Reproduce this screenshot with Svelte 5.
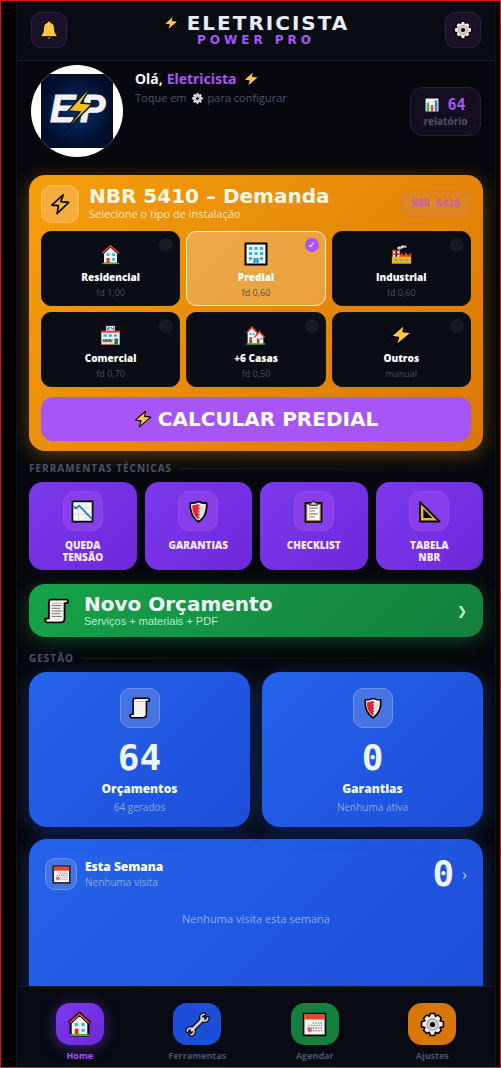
<script lang="ts">
	const types = [
		{ id: 'residencial', icon: 'house', label: 'Residencial', info: 'fd 1,00' },
		{ id: 'predial', icon: 'office', label: 'Predial', info: 'fd 0,60' },
		{ id: 'industrial', icon: 'factory', label: 'Industrial', info: 'fd 0,60' },
		{ id: 'comercial', icon: 'store', label: 'Comercial', info: 'fd 0,70' },
		{ id: 'casas', icon: 'houses', label: '+6 Casas', info: 'fd 0,50' },
		{ id: 'outros', icon: 'bolt', label: 'Outros', info: 'manual' }
	];

	const tools = [
		{ icon: 'chartDown', lines: ['Queda', 'Tensão'] },
		{ icon: 'shield', lines: ['Garantias'] },
		{ icon: 'clipboard', lines: ['Checklist'] },
		{ icon: 'ruler', lines: ['Tabela', 'NBR'] }
	];

	const stats = [
		{ icon: 'scroll', value: 64, label: 'Orçamentos', info: '64 gerados' },
		{ icon: 'shield', value: 0, label: 'Garantias', info: 'Nenhuma ativa' }
	];

	const nav = [
		{ icon: 'house', label: 'Home', tone: 'purple' },
		{ icon: 'wrench', label: 'Ferramentas', tone: 'blue' },
		{ icon: 'calendar', label: 'Agendar', tone: 'green' },
		{ icon: 'gear', label: 'Ajustes', tone: 'orange' }
	];

	let selected = $state('predial');
	let active = $state('Home');
	let selectedLabel = $derived(types.find((t) => t.id === selected)?.label ?? '');
</script>

{#snippet icon(name: string, size: number)}
	<svg class="icon" width={size} height={size} viewBox="0 0 24 24" aria-hidden="true">
		{#if name === 'bolt'}
			<path d="M15.500 1.500 2 13.500l7.500 1L7 22.500 22.500 9.500l-8.500-1z" fill="#ffc83d" stroke="#000" stroke-width="1.4" stroke-linejoin="round" />
		{:else if name === 'boltLine'}
			<path d="M15.5 2 3 13.2l7.4.6-1.6 8.7L21.5 10.2l-8.6-.6z" fill="#ffb52e" stroke="#000" stroke-width="1.8" stroke-linejoin="round" />
		{:else if name === 'bell'}
			<path d="M12 1.2c1.2 0 1.7.7 1.8 1.7 3.4 1 4.7 3.7 4.7 7.1 0 4 1 6 3 8.500v1.500H2.500V18.500c2-2.500 3-4.500 3-8.500 0-3.400 1.300-6.100 4.700-7.100.1-1 .6-1.700 1.800-1.700z" fill="#ffc83d" stroke="#000" stroke-width="1" />
			<path d="M9.500 20.500h5a2.500 2.500 0 0 1-5 0z" fill="#d67d00" stroke="#000" stroke-width=".7" />
		{:else if name === 'gear'}
			<path d="M9.800 1.500h4.400l.6 2.700 2.600-1.300 3.100 3.100-1.300 2.500 3.300.9v4.800l-3.300.8 1.300 2.600-3.100 3.100-2.600-1.300-.6 3.100H9.800l-.8-3.100-2.500 1.300-3.100-3.100L4.700 15l-3.200-.8V9.400l3.200-.9L3.400 6l3.100-3.100L9 4.200z" fill="#f0eeee" stroke="#000" stroke-width="1.500" stroke-linejoin="round" />
			<circle cx="12" cy="12" r="5.400" fill="#d8d4d2" stroke="#99928f" stroke-width="1" />
			<circle cx="12" cy="12" r="2.500" fill="#000" />
		{:else if name === 'house'}
			<path d="M3.500 10v12.500h17V10L12 2.500z" fill="#f5f5f7" stroke="#000" stroke-width="2" />
			<path d="M2 11 12 1.500 22 11" fill="none" stroke="#000" stroke-width="3.600" />
			<path d="M2.500 10.700 12 2l9.500 8.700" fill="none" stroke="#ef4527" stroke-width="1.700" />
			<path d="M7.500 10.500h3.200v3.200H7.500zM13.800 10.500H17v3.200h-3.200zM13.800 16H17v3h-3.200z" fill="#28bde6" />
			<path d="M7.500 16h3.500v6H7.500z" fill="#dd3522" />
			<path d="M2.500 21.500h19V23h-19z" fill="#35c535" />
		{:else if name === 'houses'}
			<path d="M3 8.500V21h10V8.500L8 3z" fill="#f5f5f7" />
			<path d="m1.800 9.500 6.200-7 6.200 7" fill="none" stroke="#e9452e" stroke-width="1.700" />
			<path d="M5 9h2.500v2.500H5zM9 9h2v2.500H9z" fill="#28bde6" />
			<path d="M5 14h3v7H5z" fill="#dd3522" />
			<path d="M12 13v8.500h9V13l-4.500-4.500z" fill="#f5f5f7" />
			<path d="m10.800 14.200 5.700-6.400 5.700 6.400" fill="none" stroke="#e9452e" stroke-width="1.700" />
			<path d="M17.800 14.500h2.400v2.500h-2.400z" fill="#28bde6" />
			<path d="M13.500 15.500h3v6h-3z" fill="#dd3522" />
			<path d="M1.500 21H23v1.500H1.500z" fill="#35c535" />
		{:else if name === 'office'}
			<path d="M1.500 1.500h21v21h-21z" fill="#e9f5fb" stroke="#000" stroke-width="2" />
			<path d="M5 5h3v3H5zM10.500 5h3v3h-3zM16 5h3v3h-3zM5 10h3v3H5zM10.500 10h3v3h-3zM16 10h3v3h-3zM5 15h3v3H5zM16 15h3v3h-3z" fill="#29b9e8" />
			<path d="M9.500 16h5v6h-5z" fill="#1789ce" />
			<path d="M12 16v6" stroke="#a9e4fa" stroke-width=".8" />
		{:else if name === 'factory'}
			<path d="M2 8h3v7H2zM7 8h3v7H7z" fill="#f2f2f2" />
			<path d="M1.500 6.500h4v2h-4zM6.500 6.500h4v2h-4zM1.500 10.500h4v2h-4zM6.500 10.500h4v2h-4z" fill="#e94335" />
			<path d="M7 5c0-2 2-2.500 4-2 1-2 4-2 5-.7 1-.6 2 .3 2 1.700-2 .5-3-.5-4 .5-2 .9-3 .7-4 2z" fill="#d2d2d2" />
			<path d="m10 14 2-4 3 3.500 2-4 2.500 3.500L23 10v5H10z" fill="#ef4123" />
			<path d="M1 14.500h22v8H1z" fill="#f6ad20" />
			<path d="M4 17h3v2H4zM10 17h3v2h-3zM16 17h3v2h-3z" fill="#35b8b1" />
		{:else if name === 'store'}
			<path d="M7 1h10v6H7z" fill="#f3f4f8" />
			<path d="M8.500 2.300h2v1.500h-2v1.500h2.200M13 2.200v2h2.500M15.500 2v4" fill="none" stroke="#3154c9" stroke-width="1" />
			<path d="M1.500 7h21v15.500h-21z" fill="#eff0f4" />
			<path d="M1 6.500h22v2.300H1z" fill="#e14231" />
			<path d="M4 10.500h3.500v3H4zM10 10.500h3.500v3H10zM16 10.500h3.500v3H16z" fill="#28b5e2" />
			<path d="M3 16h11v3.500H3z" fill="#7d5b50" />
			<path d="M4 16h2v2H4zM8 16h2v2H8zM12 16h2v2h-2z" fill="#34bad2" />
			<path d="M16.500 15.500h4v7h-4z" fill="#306a4c" />
			<path d="M1 21.500h15.500v1H1z" fill="#cb4937" />
		{:else if name === 'bars'}
			<path d="M1 1h22v22H1z" fill="#f6f7f9" />
			<path d="M1 7h22M1 12h22M1 17h22M8 1v22M15 1v22" stroke="#cdd2d8" stroke-width=".8" />
			<path d="M3 8h4v15H3z" fill="#34b94d" />
			<path d="M10 12h4v11h-4z" fill="#e6492f" />
			<path d="M17 4h4v19h-4z" fill="#2c7bd8" />
		{:else if name === 'chartDown'}
			<path d="M1.500 1.500h21v21h-21z" fill="#f6f7f7" stroke="#000" stroke-width="1.700" />
			<path d="M8 2v20M15.500 2v20M2 8.500h20M2 15h20" stroke="#d3d7d8" stroke-width="1" />
			<path d="m2 6 3 3 3.500-3 5 5 8.500 9" fill="none" stroke="#257bd0" stroke-width="1.800" />
		{:else if name === 'shield'}
			<path d="M12 1.500C9.500 3 6 3.300 3.500 3.300c-.5 8.200 1.500 15 8.500 19.500 7-4.500 9-11.300 8.500-19.500-2.500 0-6-.3-8.500-1.800z" fill="#f3efed" stroke="#000" stroke-width="1.800" />
			<path d="M12 4c-1.800 1-4 1.500-6.500 1.600C5.400 12 7 16.800 12 20.400z" fill="#e81e35" />
			<path d="M12.500 5v14" stroke="#e81e35" stroke-width="1.400" stroke-dasharray="1.700 1.500" />
			<path d="M14.500 5.200v12.600c2.600-3 3.900-6.800 3.800-11.800-1.500-.1-2.600-.3-3.800-.8z" fill="#e4dedb" />
		{:else if name === 'clipboard'}
			<path d="M3.500 3h17v20h-17z" fill="#af7446" stroke="#000" stroke-width="1.600" />
			<path d="M5.500 5h13v16h-13z" fill="#f8f7f5" />
			<path d="M8 5.500V3h2.200a1.800 1.800 0 0 1 3.600 0H16v2.500z" fill="#c9c4c2" stroke="#000" stroke-width=".9" />
			<path d="M7.500 8.500h9M7.500 11.500h6M7.500 14.500h9M7.500 17.500h6" stroke="#8a8583" stroke-width="1.100" />
		{:else if name === 'ruler'}
			<path d="M2 2v20.500h20.500z" fill="#f5b52a" stroke="#000" stroke-width="2" stroke-linejoin="round" />
			<path d="M6.500 11.500V18H13z" fill="#000" stroke="#000" stroke-width="1.700" />
			<path d="m5 6-1.500 1.500M8 9 6.500 10.500M11 12l-1.500 1.500M14 15l-1.500 1.500M17 18l-1.500 1.500" stroke="#8f641c" stroke-width=".8" />
		{:else if name === 'scroll' || name === 'scrollText'}
			<path d="M6 1.500h15c1.200 0 1.500 1.500 1 3H19v14.500c0 2.200-1 3.500-3 3.500H3c-1.300 0-2-1.200-2-3.500h3.500V5c0-2.300.2-3.500 1.500-3.500z" fill="#f4f2f1" stroke="#000" stroke-width="1.700" stroke-linejoin="round" />
			<path d="M7 2.500h13.500v1.500H7zM3 20h12.500v1.500H3z" fill="#fff" />
			<path d="M7 5h10" stroke="#b4adaa" stroke-width=".8" />
			{#if name === 'scrollText'}
				<path d="M7 7h9.500M7 9.500h8M7 12h9.500M7 14.500h8M7 17h9.500" stroke="#77706e" stroke-width=".9" />
			{/if}
		{:else if name === 'calendar'}
			<path d="M1.500 1.500h21v21h-21z" fill="#f8f7f7" stroke="#000" stroke-width="1.600" />
			<path d="M2.200 2.200h19.600v5H2.200z" fill="#ed4224" />
			<path d="M10 10.500h10M6 13h14M5 15.500h15M8 18h12" stroke="#a7a2a1" stroke-width="1.500" stroke-dasharray="1.700 .8" />
			<path d="m5.500 15.500 3.500 3.500M9 15.500 5.500 19M7.200 14.700v5M4.700 17.200h5" stroke="#ed3c45" stroke-width=".9" />
		{:else if name === 'wrench'}
			<g fill="none" stroke-linecap="round" stroke-linejoin="round">
				<path d="M6.500 17.500 17.500 6.500" stroke="#000" stroke-width="5" />
				<path d="M18.500 2.200a3.200 3.200 0 1 0 3.300 3.300M5.500 21.800a3.200 3.200 0 1 0-3.300-3.300" stroke="#000" stroke-width="4" />
				<path d="M6.500 17.500 17.500 6.500" stroke="#d6d2d1" stroke-width="2.600" />
				<path d="M18.500 2.200a3.200 3.200 0 1 0 3.300 3.300M5.500 21.800a3.200 3.200 0 1 0-3.300-3.300" stroke="#d6d2d1" stroke-width="1.600" />
			</g>
		{/if}
	</svg>
{/snippet}

<div class="page">
	<div class="frame">
		<header>
			<button class="square" aria-label="Notificações">{@render icon('bell', 20)}</button>
			<div class="brand">
				<h1>{@render icon('bolt', 16)} ELETRICISTA</h1>
				<p>POWER PRO</p>
			</div>
			<button class="square" aria-label="Configurações">{@render icon('gear', 20)}</button>
		</header>

		<main>
			<section class="profile">
				<svg class="avatar" viewBox="0 0 92 92" role="img" aria-label="EP">
					<defs>
						<radialGradient id="night">
							<stop offset="0" stop-color="#06306b" />
							<stop offset="1" stop-color="#020d2a" />
						</radialGradient>
						<linearGradient id="flash" x1="0" y1="0" x2="0" y2="1">
							<stop offset="0" stop-color="#ffd928" />
							<stop offset="1" stop-color="#f5a000" />
						</linearGradient>
						<clipPath id="round"><circle cx="46" cy="46" r="46" /></clipPath>
					</defs>
					<circle cx="46" cy="46" r="46" fill="#fff" />
					<rect x="10" y="9" width="72" height="74" rx="4" fill="url(#night)" clip-path="url(#round)" />
					<text x="19" y="57" class="logo-text">E</text>
					<text x="49" y="57" class="logo-text">P</text>
					<path d="M62 19 37 46l12 1-20 25 32-33-11-1z" fill="url(#flash)" stroke="#071632" stroke-width="1.500" />
				</svg>
				<div class="hello">
					<h2>Olá, <span>Eletricista</span> {@render icon('bolt', 18)}</h2>
					<p>Toque em {@render icon('gear', 13)} para configurar</p>
				</div>
				<button class="report">
					<span class="report-value">{@render icon('bars', 14)} 64</span>
					<span class="report-label">relatório</span>
				</button>
			</section>

			<section class="demand">
				<div class="demand-head">
					<div class="demand-icon">{@render icon('boltLine', 22)}</div>
					<div class="demand-title">
						<h2>NBR 5410 – Demanda</h2>
						<p>Selecione o tipo de instalação</p>
					</div>
					<span class="badge">NBR 5410</span>
				</div>
				<div class="types" role="radiogroup" aria-label="Tipo de instalação">
					{#each types as t (t.id)}
						<label class="type" class:selected={selected === t.id}>
							<input type="radio" name="tipo" value={t.id} bind:group={selected} />
							<span class="type-icon">{@render icon(t.icon, t.id === 'predial' || t.id === 'outros' ? 24 : 21)}</span>
							<strong>{t.label}</strong>
							<small>{t.info}</small>
						</label>
					{/each}
				</div>
				<button class="calc">{@render icon('bolt', 18)} CALCULAR {selectedLabel.toUpperCase()}</button>
			</section>

			<h3>Ferramentas Técnicas</h3>
			<section class="tools">
				{#each tools as tool}
					<button class="tool">
						<span class="tool-icon">{@render icon(tool.icon, 23)}</span>
						{#each tool.lines as line}
							<span>{line}</span>
						{/each}
					</button>
				{/each}
			</section>

			<button class="budget">
				{@render icon('scrollText', 26)}
				<span class="budget-text">
					<strong>Novo Orçamento</strong>
					<small>Serviços + materiais + PDF</small>
				</span>
				<span class="chevron">❯</span>
			</button>

			<h3 class="spaced">Gestão</h3>
			<section class="stats">
				{#each stats as stat}
					<button class="stat">
						<span class="stat-icon">{@render icon(stat.icon, 22)}</span>
						<span class="number">{stat.value}</span>
						<strong>{stat.label}</strong>
						<small>{stat.info}</small>
					</button>
				{/each}
			</section>

			<section class="week">
				<div class="week-head">
					<span class="stat-icon small">{@render icon('calendar', 19)}</span>
					<div class="week-title">
						<h2>Esta Semana</h2>
						<p>Nenhuma visita</p>
					</div>
					<span class="number">0</span>
					<span class="arrow">›</span>
				</div>
				<p class="empty">Nenhuma visita esta semana</p>
			</section>
		</main>

		<nav>
			{#each nav as item}
				<button class="nav-item" class:active={active === item.label} onclick={() => (active = item.label)}>
					<span class="nav-icon {item.tone}">{@render icon(item.icon, 25)}</span>
					{item.label}
				</button>
			{/each}
		</nav>
	</div>
</div>

<style>
	:global(body) {
		background: #000;
	}
	* {
		box-sizing: border-box;
	}
	h1,
	h2,
	h3,
	p {
		margin: 0;
	}
	button {
		font-family: inherit;
		border: 0;
		padding: 0;
		cursor: pointer;
	}
	.icon {
		display: block;
		flex: none;
	}
	.page {
		height: 100vh;
		padding: 0 4px 0 15px;
		border: 1px solid #e3120b;
		background: #000;
		color: #f1f5f9;
		font-family: 'Open Sans', 'Noto Sans', sans-serif;
	}
	.frame {
		display: flex;
		flex-direction: column;
		height: 100%;
		border: solid #11141e;
		border-width: 0 1px;
		background: #07080d;
	}

	header {
		display: flex;
		align-items: center;
		justify-content: space-between;
		flex: none;
		padding: 11px 14px 12px;
		background: #0a0c14;
		border-bottom: 1px solid #1b1e2b;
	}
	.square {
		display: grid;
		place-items: center;
		width: 36px;
		height: 36px;
		border: 1px solid #2f1d49;
		border-radius: 10px;
		background: #1a1229;
	}
	.brand {
		text-align: center;
		font-family: 'DejaVu Sans', sans-serif;
	}
	h1 {
		display: flex;
		align-items: center;
		justify-content: center;
		gap: 8px;
		font-size: 20px;
		line-height: 20px;
		letter-spacing: 2px;
		color: #e8ecf8;
	}
	.brand p {
		font-size: 12px;
		line-height: 14px;
		font-weight: 700;
		letter-spacing: 4px;
		color: #a855f7;
	}

	main {
		flex: 1;
		min-height: 0;
		padding: 4px 12px 0;
		overflow-y: auto;
		scrollbar-width: none;
	}
	.profile {
		display: flex;
		gap: 12px;
		padding: 0 2px 18px;
	}
	.avatar {
		flex: none;
		width: 92px;
		height: 92px;
	}
	.logo-text {
		font-family: 'Liberation Sans', sans-serif;
		font-size: 38px;
		font-weight: 700;
		font-style: italic;
		fill: #f0f2f6;
		stroke: #f0f2f6;
		stroke-width: 1px;
	}
	.hello {
		flex: 1;
		padding-top: 4px;
	}
	.hello h2,
	.hello p {
		display: flex;
		align-items: center;
		gap: 4px;
	}
	.hello h2 {
		font-family: 'Noto Sans', sans-serif;
		font-size: 14px;
		line-height: 20px;
	}
	.hello h2 span {
		margin-right: 2px;
		color: #a855f7;
	}
	.hello p {
		font-size: 11px;
		line-height: 18px;
		color: #475569;
	}
	.report {
		display: flex;
		flex-direction: column;
		align-items: center;
		align-self: flex-end;
		justify-content: center;
		margin-bottom: 21px;
		width: 71px;
		height: 49px;
		border: 1px solid #2d1a43;
		border-radius: 12px;
		background: #150e20;
	}
	.report-value {
		display: flex;
		align-items: center;
		gap: 8px;
		font-family: 'DejaVu Sans Mono', monospace;
		font-size: 15px;
		line-height: 18px;
		font-weight: 700;
		color: #a855f7;
	}
	.report-label {
		font-size: 10px;
		line-height: 14px;
		font-weight: 700;
		color: #475569;
	}

	.demand {
		padding: 10px 12px;
		border-radius: 16px;
		background: linear-gradient(135deg, #f59e0b, #d97706);
		box-shadow: 0 4px 20px rgba(245, 158, 11, 0.35);
	}
	.demand-head {
		display: flex;
		align-items: center;
		gap: 10px;
		margin-bottom: 8px;
	}
	.demand-icon {
		display: grid;
		place-items: center;
		width: 38px;
		height: 38px;
		border: 1px solid #f9bd5d;
		border-radius: 10px;
		background: #f6ad3b;
	}
	.demand-title {
		flex: 1;
	}
	.demand-title h2 {
		font-family: 'DejaVu Sans', sans-serif;
		font-size: 20px;
		line-height: 20px;
		white-space: nowrap;
		color: #fff8e8;
	}
	.demand-title p {
		font-size: 11px;
		line-height: 16px;
		color: #fde5bb;
	}
	.badge {
		padding: 5px 10px;
		border: 1px solid #d8802f;
		border-radius: 8px;
		background: #df8623;
		font-family: 'DejaVu Sans Mono', monospace;
		font-size: 10px;
		line-height: 14px;
		font-weight: 700;
		white-space: nowrap;
		color: #c45fb4;
	}
	.types {
		display: grid;
		grid-template-columns: repeat(3, 1fr);
		gap: 6px;
	}
	.type {
		position: relative;
		display: flex;
		flex-direction: column;
		align-items: center;
		height: 75px;
		padding-top: 10px;
		border: 1px solid #11131d;
		border-radius: 10px;
		background: #0a0c16;
		cursor: pointer;
	}
	.type.selected {
		border-color: #fff3d0;
		background: linear-gradient(135deg, #eda94a, #eba03a);
	}
	.type-icon {
		display: grid;
		place-items: center;
		height: 24px;
	}
	.type input {
		appearance: none;
		position: absolute;
		top: 6px;
		right: 6px;
		display: grid;
		place-items: center;
		width: 14px;
		height: 14px;
		margin: 0;
		border-radius: 50%;
		background: #171923;
	}
	.type input:checked {
		background: #a855f7;
	}
	.type input:checked::before {
		content: '✓';
		font-family: 'DejaVu Sans', sans-serif;
		font-size: 9px;
		line-height: 14px;
		color: #fff;
	}
	.type strong {
		margin-top: 4px;
		font-size: 10px;
		line-height: 14px;
		font-weight: 800;
		color: #fff;
	}
	.type small {
		margin-top: 2px;
		font-size: 9px;
		line-height: 14px;
		color: #4b505d;
	}
	.calc {
		display: flex;
		align-items: center;
		justify-content: center;
		gap: 6px;
		width: 100%;
		height: 44px;
		margin-top: 10px;
		border-radius: 12px;
		background: #a855f7;
		font-family: 'DejaVu Sans', sans-serif;
		font-size: 20px;
		font-weight: 700;
		color: #fff;
	}

	h3 {
		display: flex;
		align-items: center;
		gap: 8px;
		margin: 10px 0 7px;
		font-size: 10px;
		line-height: 14px;
		font-weight: 700;
		letter-spacing: 1px;
		text-transform: uppercase;
		color: #475569;
	}
	h3::after {
		content: '';
		flex: 1;
		height: 1px;
		background: linear-gradient(90deg, #1c202b, transparent);
	}
	h3.spaced {
		margin-top: 14px;
	}

	.tools {
		display: grid;
		grid-template-columns: repeat(4, 1fr);
		gap: 8px;
	}
	.tool {
		display: flex;
		flex-direction: column;
		align-items: center;
		height: 88px;
		padding-top: 9px;
		border-radius: 14px;
		background: linear-gradient(135deg, #7c3aed, #6d28d9);
		font-size: 10px;
		line-height: 12px;
		font-weight: 800;
		text-transform: uppercase;
		color: #f3eafe;
	}
	.tool-icon {
		display: grid;
		place-items: center;
		width: 40px;
		height: 40px;
		margin-bottom: 8px;
		border: 1px solid #904bee;
		border-radius: 11px;
		background: #883feb;
	}

	.budget {
		display: flex;
		align-items: center;
		gap: 14px;
		width: 100%;
		height: 53px;
		margin-top: 14px;
		padding: 0 16px 0 15px;
		border-radius: 16px;
		background: linear-gradient(135deg, #16a34a, #15803d);
		box-shadow: 0 4px 18px rgba(22, 163, 74, 0.35);
		font-family: 'Liberation Sans', sans-serif;
		text-align: left;
		color: #f0fdf4;
	}
	.budget-text {
		display: flex;
		flex: 1;
		flex-direction: column;
	}
	.budget strong {
		font-family: 'DejaVu Sans', sans-serif;
		font-size: 20px;
		line-height: 20px;
	}
	.budget small {
		font-size: 11px;
		line-height: 14px;
		color: #bfe6cb;
	}
	.chevron {
		font-family: 'DejaVu Sans', sans-serif;
		font-size: 12px;
		color: #c8ecd3;
	}

	.stats {
		display: grid;
		grid-template-columns: repeat(2, 1fr);
		gap: 12px;
	}
	.stat {
		display: flex;
		flex-direction: column;
		align-items: center;
		height: 155px;
		padding-top: 16px;
		border-radius: 18px;
		background: linear-gradient(135deg, #2563eb, #1d4ed8);
		box-shadow: 0 4px 20px rgba(37, 99, 235, 0.35);
		color: #f1f6ff;
	}
	.stat-icon {
		display: grid;
		place-items: center;
		width: 40px;
		height: 40px;
		margin-bottom: 11px;
		border: 1px solid #6d93ec;
		border-radius: 10px;
		background: #4674e2;
	}
	.stat-icon.small {
		width: 32px;
		height: 32px;
		margin: 0;
	}
	.number {
		font-family: 'DejaVu Sans Mono', monospace;
		font-size: 36px;
		line-height: 38px;
		font-weight: 700;
		color: #edf4ff;
	}
	.stat strong {
		margin-top: 3px;
		font-size: 12px;
		line-height: 18px;
		font-weight: 800;
	}
	.stat small {
		margin-top: 2px;
		font-size: 10px;
		line-height: 14px;
		color: #8ba6d8;
	}

	.week {
		height: 170px;
		margin-top: 12px;
		padding: 16px;
		border-radius: 18px;
		background: linear-gradient(135deg, #2563eb, #1d4ed8);
		box-shadow: 0 4px 20px rgba(37, 99, 235, 0.35);
	}
	.week-head {
		display: flex;
		align-items: center;
		gap: 8px;
	}
	.week-title {
		flex: 1;
	}
	.week h2 {
		font-size: 12px;
		line-height: 16px;
		font-weight: 800;
		color: #fff;
	}
	.week-title p {
		font-size: 10px;
		line-height: 14px;
		color: #8ba6d8;
	}
	.arrow {
		font-size: 16px;
		line-height: 18px;
		color: #b9cdf7;
	}
	.empty {
		margin-top: 18px;
		font-size: 11px;
		line-height: 16px;
		text-align: center;
		color: #8cabf2;
	}

	nav {
		z-index: 1;
		display: flex;
		flex: none;
		height: 81px;
		padding: 16px 4px 0;
		border-top: 1px solid #181d27;
		background: #080b14;
	}
	.nav-item {
		display: flex;
		flex: 1;
		flex-direction: column;
		align-items: center;
		gap: 4px;
		background: none;
		font-size: 9px;
		line-height: 14px;
		font-weight: 700;
		color: #475569;
	}
	.nav-item.active {
		color: #a855f7;
	}
	.nav-icon {
		display: grid;
		place-items: center;
		width: 48px;
		height: 42px;
		border-radius: 14px;
	}
	.purple {
		background: linear-gradient(135deg, #7c3aed, #6d28d9);
	}
	.active .nav-icon {
		box-shadow: 0 2px 14px rgba(124, 58, 237, 0.5);
	}
	.blue {
		background: #1d4ed8;
	}
	.green {
		background: #15803d;
	}
	.orange {
		background: #d97706;
	}
</style>
